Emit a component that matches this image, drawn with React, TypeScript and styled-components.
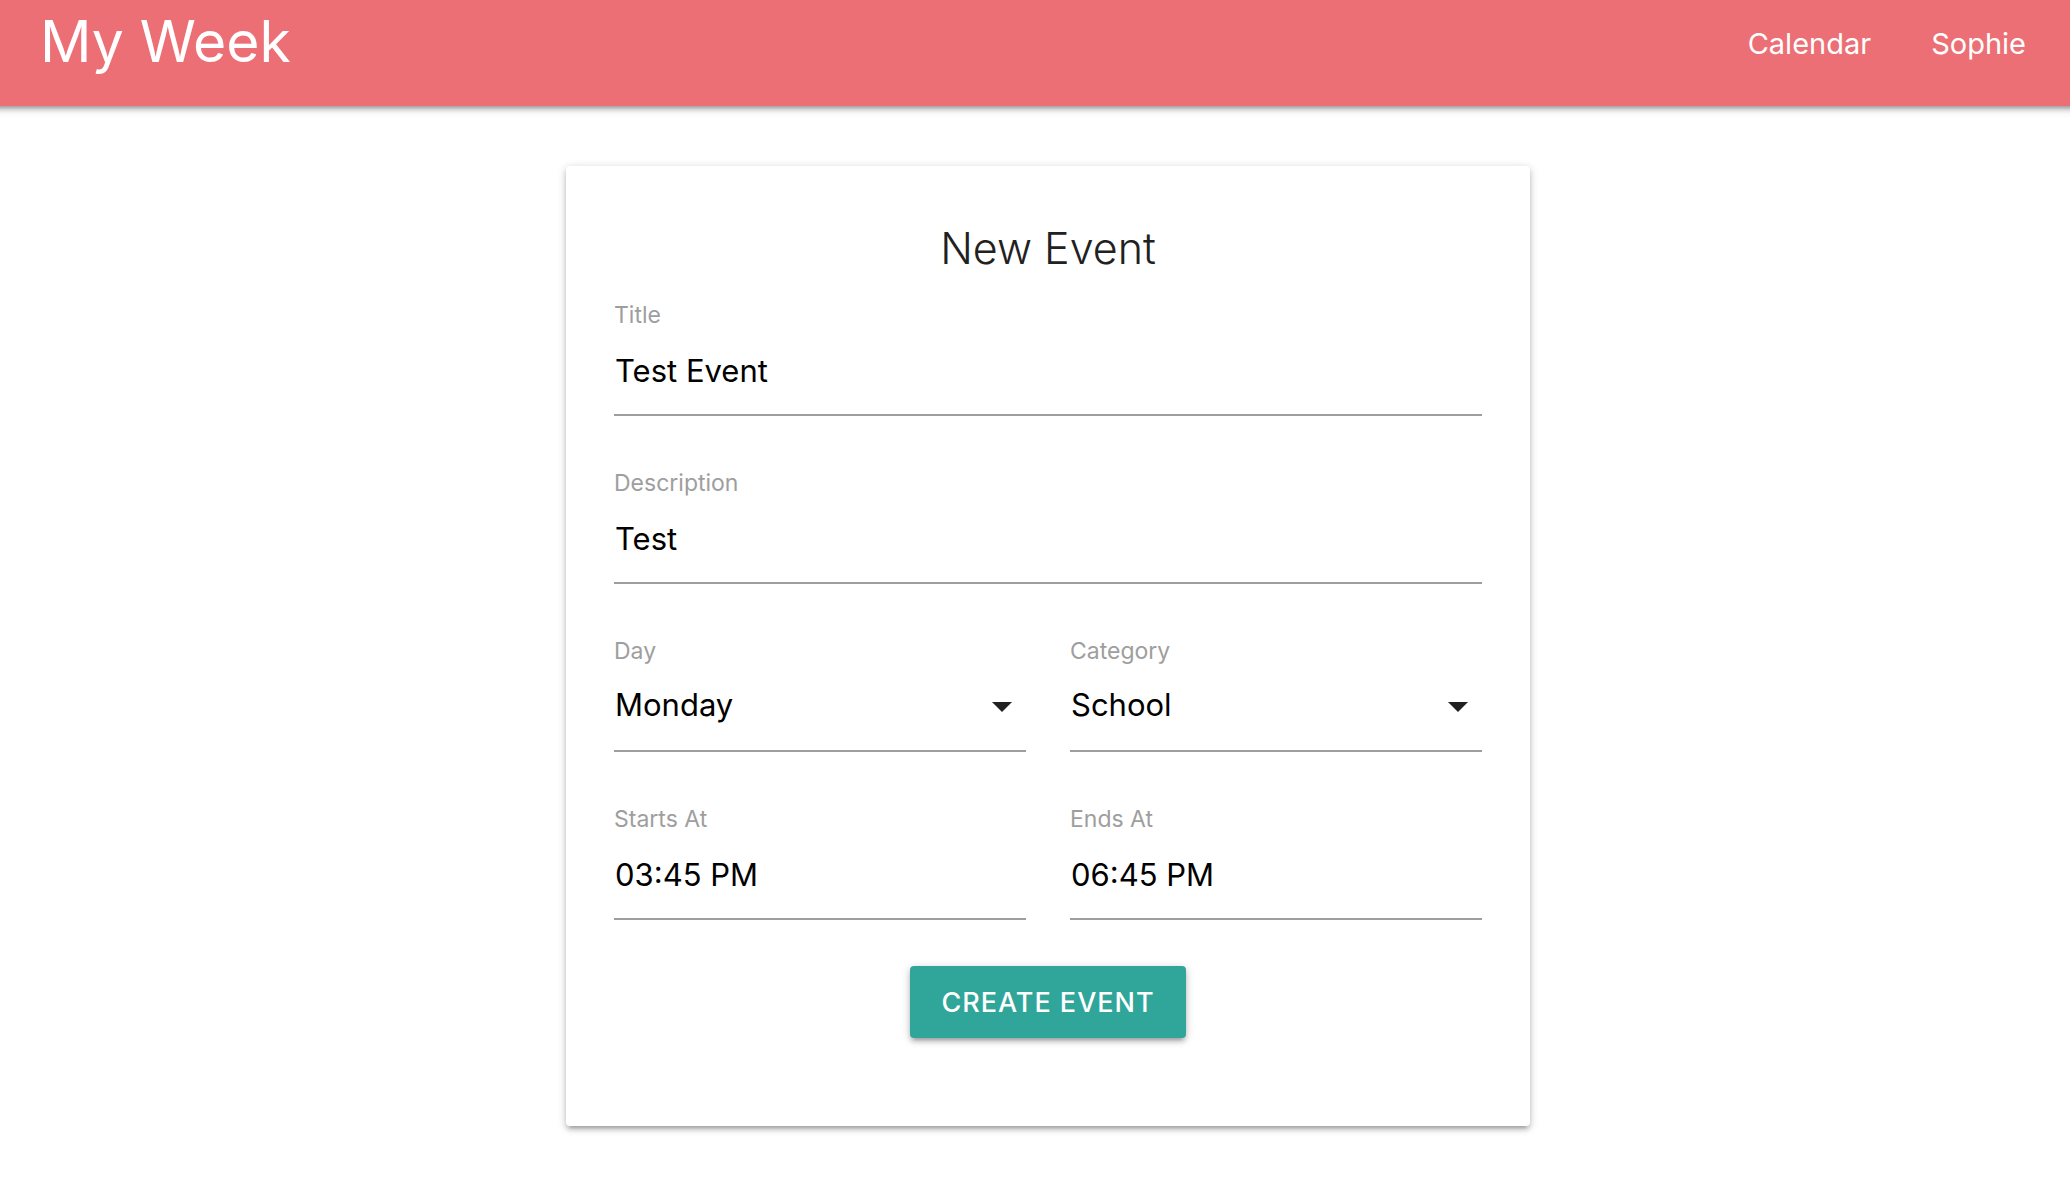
import React, { useState } from "react";
import styled, { createGlobalStyle, css } from "styled-components";

const GlobalStyle = createGlobalStyle`
  *, *::before, *::after { box-sizing: border-box; }
  body {
    margin: 0;
    overflow-x: hidden;
    background: #fff;
    color: #212121;
    font-family: Inter, "Liberation Sans", sans-serif;
  }
`;

const depth = "0 4px 4px 0 rgba(0,0,0,.14), 0 6px 2px -4px rgba(0,0,0,.12), 0 2px 10px 0 rgba(0,0,0,.2)";

/* Bleeds past both window edges so that its shadow stays even across the page. */
const NavBar = styled.header`
  display: flex;
  align-items: flex-start;
  justify-content: space-between;
  height: 106px;
  margin: 0 -12px;
  padding: 0 56px 0 52px;
  background: #ec6f75;
  box-shadow: ${depth};
`;

const Brand = styled.a`
  color: #fff;
  font-size: 57px;
  line-height: 84px;
  text-decoration: none;
`;

const NavLinks = styled.nav`
  display: flex;
  gap: 60px;
`;

const NavLink = styled.a`
  color: #fff;
  font-size: 29px;
  line-height: 88px;
  text-decoration: none;
`;

const Main = styled.main`
  padding: 60px 0 60px 26px;
`;

const Card = styled.form`
  max-width: 964px;
  margin: 0 auto;
  padding: 48px 48px 88px;
  border-radius: 4px;
  background: #fff;
  box-shadow: ${depth};
`;

const Heading = styled.h1`
  margin: 0 0 14px;
  font-size: 43px;
  font-weight: 300;
  line-height: 68px;
  text-align: center;
`;

const Fields = styled.div`
  display: grid;
  grid-template-columns: 1fr 1fr;
  column-gap: 44px;
  row-gap: 48px;
`;

const Field = styled.div<{ $wide?: boolean }>`
  display: flex;
  flex-direction: column;
  min-width: 0;
  grid-column: ${(p) => (p.$wide ? "1 / -1" : "auto")};
`;

const Label = styled.label`
  color: #9e9e9e;
  font-size: 23px;
  line-height: 38px;
`;

const control = css`
  width: 100%;
  height: 82px;
  margin: 0;
  border: 0;
  border-bottom: 2px solid #9e9e9e;
  border-radius: 0;
  outline: 0;
  background: transparent;
  color: #000;
  font-family: inherit;
  font-size: 31px;
`;

const TextInput = styled.input`
  ${control}
  padding: 0 0 8px 1px;
`;

const SelectWrap = styled.div`
  display: grid;
  align-items: center;

  > * {
    grid-area: 1 / 1;
  }
`;

const Select = styled.select`
  ${control}
  padding: 0 40px 12px 1px;
  appearance: none;
`;

const Caret = styled.svg`
  justify-self: end;
  width: 20px;
  height: 10px;
  margin: 0 14px 8px 0;
  fill: #212121;
  pointer-events: none;
`;

const Actions = styled.div`
  display: flex;
  justify-content: center;
  margin-top: 46px;
`;

const SubmitButton = styled.button`
  height: 72px;
  padding: 0 31px;
  border: 0;
  border-radius: 4px;
  background: #2fa699;
  box-shadow: ${depth};
  color: #fff;
  font-family: inherit;
  font-size: 27px;
  font-weight: 500;
  letter-spacing: 1px;
  text-transform: uppercase;
  cursor: pointer;
`;

interface InputProps {
  id: string;
  label: string;
  initial: string;
  wide?: boolean;
}

function InputField({ id, label, initial, wide }: InputProps) {
  const [value, setValue] = useState(initial);
  return (
    <Field $wide={wide}>
      <Label htmlFor={id}>{label}</Label>
      <TextInput id={id} type="text" value={value} onChange={(e) => setValue(e.target.value)} />
    </Field>
  );
}

function SelectField({ id, label, options }: { id: string; label: string; options: string[] }) {
  return (
    <Field>
      <Label htmlFor={id}>{label}</Label>
      <SelectWrap>
        <Select id={id} defaultValue={options[0]}>
          {options.map((o) => (
            <option key={o}>{o}</option>
          ))}
        </Select>
        <Caret viewBox="0 0 20 10" aria-hidden="true">
          <path d="M0 0h20L10 10z" />
        </Caret>
      </SelectWrap>
    </Field>
  );
}

export default function App() {
  return (
    <>
      <GlobalStyle />
      <NavBar>
        <Brand href="#">My Week</Brand>
        <NavLinks>
          <NavLink href="#calendar">Calendar</NavLink>
          <NavLink href="#profile">Sophie</NavLink>
        </NavLinks>
      </NavBar>
      <Main>
        <Card onSubmit={(e) => e.preventDefault()}>
          <Heading>New Event</Heading>
          <Fields>
            <InputField id="title" label="Title" initial="Test Event" wide />
            <InputField id="description" label="Description" initial="Test" wide />
            <SelectField id="day" label="Day" options={["Monday"]} />
            <SelectField id="category" label="Category" options={["School"]} />
            <InputField id="starts" label="Starts At" initial="03:45 PM" />
            <InputField id="ends" label="Ends At" initial="06:45 PM" />
          </Fields>
          <Actions>
            <SubmitButton type="submit">Create Event</SubmitButton>
          </Actions>
        </Card>
      </Main>
    </>
  );
}
